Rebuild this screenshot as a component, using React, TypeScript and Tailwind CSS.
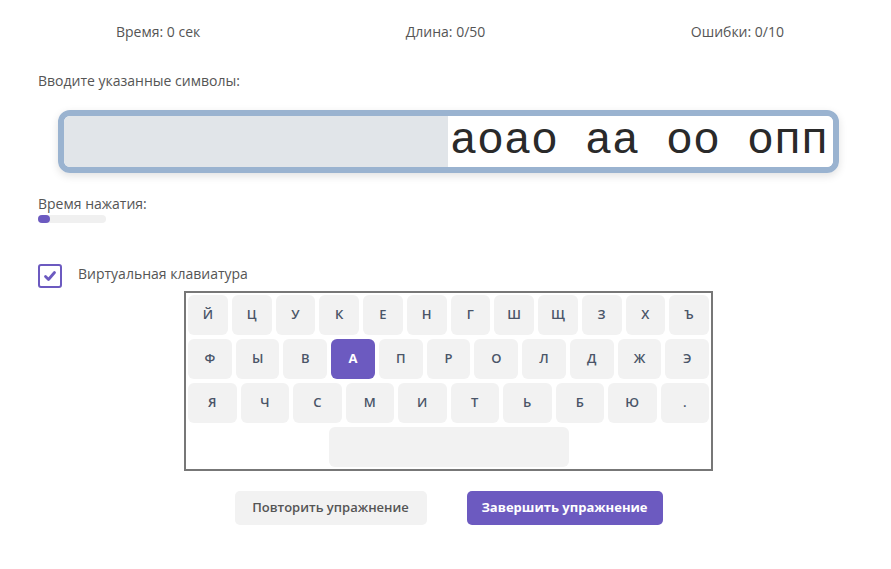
const row1 = ["Й", "Ц", "У", "К", "Е", "Н", "Г", "Ш", "Щ", "З", "Х", "Ъ"]
const row2 = ["Ф", "Ы", "В", "А", "П", "Р", "О", "Л", "Д", "Ж", "Э"]
const row3 = ["Я", "Ч", "С", "М", "И", "Т", "Ь", "Б", "Ю", "."]

const active = "А"

function Key({ label }: { label: string }) {
  const on = label === active
  return (
    <div
      className={
        on
          ? "flex h-[40px] flex-1 items-center justify-center rounded-[6px] bg-[#6c5ac0] text-[13px] font-bold text-white"
          : "flex h-[40px] flex-1 items-center justify-center rounded-[6px] bg-[#f2f2f2] text-[13px] font-semibold text-[#4a5568]"
      }
    >
      {label}
    </div>
  )
}

function Row({ keys }: { keys: string[] }) {
  return (
    <div className="flex gap-[4px]">
      {keys.map((k) => (
        <Key key={k} label={k} />
      ))}
    </div>
  )
}

export default function App() {
  return (
    <div
      className="min-h-[569px] bg-white pl-[38px] pr-[32px] text-[#555]"
      style={{ fontFamily: '"Open Sans", "Noto Sans", sans-serif' }}
    >
      <div className="flex justify-between pl-[78px] pr-[75px] pt-[22px] text-[14px] leading-[20px] text-[#555]">
        <span>Время: 0 сек</span>
        <span>Длина: 0/50</span>
        <span>Ошибки: 0/10</span>
      </div>

      <p className="mt-[29px] text-[14px] leading-[20px]">Вводите указанные символы:</p>

      <div className="mx-[20px] mt-[19px] overflow-hidden rounded-[12px] border-[6px] border-[#9ab3d0] shadow-[0_3px_8px_rgba(0,0,0,0.12)]">
        <div className="flex h-[51px]">
          <div className="w-[384px] shrink-0 bg-[#e1e5e9]" />
          <div
            className="flex flex-1 items-center overflow-hidden whitespace-pre bg-white pl-[2px] text-[45px] leading-none text-[#2a2a2a]"
            style={{ fontFamily: '"Liberation Mono", "Courier New", monospace' }}
          >
            аоао аа оо опп
          </div>
        </div>
      </div>

      <p className="mt-[22px] text-[14px] leading-[18px]">Время нажатия:</p>
      <div className="mt-[2px] h-[8px] w-[68px] rounded-full bg-[#f0f0f0]">
        <div className="h-[8px] w-[12px] rounded-full bg-[#6c5ac0]" />
      </div>

      <div className="mt-[41px] flex items-center gap-[16px]">
        <div className="flex h-[24px] w-[24px] items-center justify-center rounded-[3px] border-2 border-[#6c5ac0]">
          <svg width="14" height="14" viewBox="0 0 14 14" fill="none">
            <path d="M2.5 7.5 L5.5 10.5 L11.5 3.5" stroke="#6c5ac0" strokeWidth="2.8" strokeLinecap="round" strokeLinejoin="round" />
          </svg>
        </div>
        <span className="-mt-[6px] text-[14px] text-[#555]">Виртуальная клавиатура</span>
      </div>

      <div className="mx-auto mt-[3px] flex w-[529px] flex-col gap-[4px] border-2 border-[#777] p-[2px]">
        <Row keys={row1} />
        <Row keys={row2} />
        <Row keys={row3} />
        <div className="flex justify-center">
          <div className="h-[40px] w-[240px] rounded-[6px] bg-[#f2f2f2]" />
        </div>
      </div>

      <div className="mt-[20px] flex justify-center gap-[40px]">
        <button className="h-[34px] w-[192px] rounded-[5px] bg-[#f2f2f2] text-[13px] font-semibold text-[#555]">
          Повторить упражнение
        </button>
        <button className="h-[34px] w-[196px] rounded-[5px] bg-[#6c5ac0] text-[13px] font-bold text-white">
          Завершить упражнение
        </button>
      </div>
    </div>
  )
}
